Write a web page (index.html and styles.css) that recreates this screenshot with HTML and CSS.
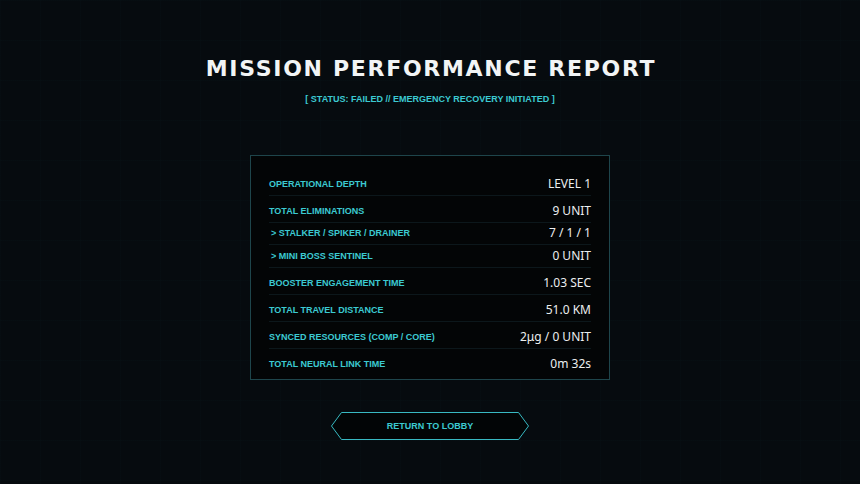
FILE: index.html
```html
<!DOCTYPE html>
<html>
<head>
<meta charset="utf-8">
<link rel="stylesheet" href="styles.css">
</head>
<body>
<main class="screen">
  <h1 class="title">MISSION PERFORMANCE REPORT</h1>
  <p class="status">[ STATUS: FAILED // EMERGENCY RECOVERY INITIATED ]</p>
  <section class="panel">
    <div class="row"><span class="label">OPERATIONAL DEPTH</span><span class="value">LEVEL 1</span></div>
    <div class="row"><span class="label">TOTAL ELIMINATIONS</span><span class="value">9 UNIT</span></div>
    <div class="row sub"><span class="label">&gt; STALKER / SPIKER / DRAINER</span><span class="value">7 / 1 / 1</span></div>
    <div class="row sub"><span class="label">&gt; MINI BOSS SENTINEL</span><span class="value">0 UNIT</span></div>
    <div class="row"><span class="label">BOOSTER ENGAGEMENT TIME</span><span class="value">1.03 SEC</span></div>
    <div class="row"><span class="label">TOTAL TRAVEL DISTANCE</span><span class="value">51.0 KM</span></div>
    <div class="row"><span class="label">SYNCED RESOURCES (COMP / CORE)</span><span class="value">2μg / 0 UNIT</span></div>
    <div class="row last"><span class="label">TOTAL NEURAL LINK TIME</span><span class="value">0m 32s</span></div>
  </section>
  <button class="lobby">
    <svg class="hex" width="198" height="28" viewBox="0 0 198 28"><polygon points="10.5,0.5 187.5,0.5 197.5,14 187.5,27.5 10.5,27.5 0.5,14" fill="#020506" stroke="#38b9c2" stroke-width="1"/></svg>
    <span class="lobby-text">RETURN TO LOBBY</span>
  </button>
</main>
</body>
</html>
```

FILE: styles.css
```css
html, body {
  margin: 0;
  padding: 0;
}
body {
  width: 860px;
  height: 484px;
  overflow: hidden;
  background-color: #060b0f;
  background-image:
    linear-gradient(rgba(60, 200, 210, 0.012) 1px, transparent 1px),
    linear-gradient(90deg, rgba(60, 200, 210, 0.012) 1px, transparent 1px);
  background-size: 40px 40px;
}
.screen {
  display: flex;
  flex-direction: column;
  align-items: center;
  padding-top: 56px;
}
.title {
  margin: 0;
  font-family: "DejaVu Sans", sans-serif;
  font-weight: bold;
  font-size: 22px;
  line-height: 26px;
  letter-spacing: 1.7px;
  color: #f2f4f5;
  padding-left: 2px;
}
.status {
  margin: 11px 0 0;
  font-family: "Liberation Sans", Arial, sans-serif;
  font-weight: bold;
  font-size: 9px;
  line-height: 12px;
  color: #3ccad2;
}
.panel {
  margin-top: 50px;
  width: 322px;
  padding: 13px 18px 4px;
  border: 1px solid #1e454b;
  background: #030506;
  display: flex;
  flex-direction: column;
}
.row {
  display: flex;
  justify-content: space-between;
  align-items: center;
  padding: 8px 0 4px;
  border-bottom: 1px solid #0c171b;
  line-height: 14px;
}
.row.sub {
  padding-top: 3px;
}
.row.sub + .row.sub {
  padding-top: 4px;
}
.row.sub .label {
  padding-left: 2px;
}
.row.last {
  border-bottom: none;
}
.label {
  font-family: "Liberation Sans", Arial, sans-serif;
  font-weight: bold;
  font-size: 9px;
  color: #3ccad2;
}
.value {
  font-family: "Noto Sans", sans-serif;
  font-size: 12px;
  color: #eceeef;
}
.lobby {
  margin-top: 32px;
  position: relative;
  width: 198px;
  height: 28px;
  padding: 0;
  border: none;
  background: none;
  display: flex;
  align-items: center;
  justify-content: center;
}
.hex {
  position: absolute;
  left: 0;
  top: 0;
}
.lobby-text {
  position: relative;
  font-family: "Liberation Sans", Arial, sans-serif;
  font-weight: bold;
  font-size: 9px;
  color: #3ccad2;
}
```
